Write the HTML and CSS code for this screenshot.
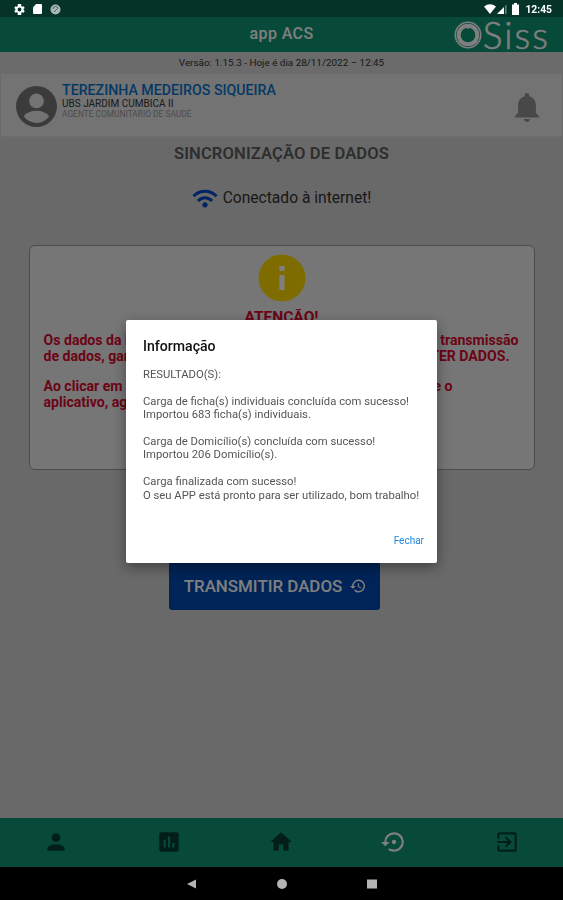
FILE: index.html
```
<!DOCTYPE html>
<html lang="pt-BR">
<head>
    <meta charset="UTF-8">
    <meta name="viewport" content="width=device-width, initial-scale=1.0">
    <title>app ACS</title>
    <link rel="stylesheet" href="styles.css">
</head>
<body>
    <div class="tela">
        <div class="status-bar"></div>
        <header class="topo">
            <h1>app ACS</h1>
            <div class="logo">
                <svg viewBox="0 0 28 28" width="28" height="28" fill="none" stroke="#fff">
                    <circle cx="14" cy="14" r="12.7" stroke-width="1.6"/>
                    <circle cx="14" cy="14" r="9.3" stroke-width="4"/>
                    <path d="M7 9c2-4 5-5 7-2 2-3 6-2 7 2" stroke-width="1.5"/>
                    <path d="M5 20c4 5 14 5 18 0" stroke-width="2"/>
                </svg>
                <span>Siss</span>
            </div>
        </header>
        <div class="versao">Versão: 1.15.3 - Hoje é dia 28/11/2022 – 12:45</div>
        <section class="usuario">
            <svg class="avatar" viewBox="2 2 20 20" width="41" height="41"><path d="M12 2a10 10 0 1 0 0 20 10 10 0 0 0 0-20zm0 3.7a3.6 3.6 0 1 1 0 7.2 3.6 3.6 0 0 1 0-7.2zM12 20c-2.500 0-4.800-1.200-6.200-3.200 1-1.800 4-2.700 6.200-2.700s5.200.9 6.200 2.700A7.500 7.500 0 0 1 12 20z"/></svg>
            <div class="dados-usuario">
                <div class="nome">TEREZINHA MEDEIROS SIQUEIRA</div>
                <div class="unidade">UBS JARDIM CUMBICA II</div>
                <div class="cargo">AGENTE COMUNITARIO DE SAUDE</div>
            </div>
            <svg class="sino" viewBox="4 2.500 16 19.500" width="24" height="29"><path d="M12 22c1.100 0 2-.9 2-2h-4c0 1.100.9 2 2 2zm6-6v-5c0-3.070-1.640-5.640-4.500-6.320V4a1.500 1.500 0 0 0-3 0v.68C7.630 5.360 6 7.920 6 11v5l-2 2v1h16v-1l-2-2z"/></svg>
        </section>

        <main class="conteudo">
            <h2>SINCRONIZAÇÃO DE DADOS</h2>
            <div class="conexao">
                <svg viewBox="0 0 26 19" width="26" height="19" fill="none" stroke="#0048c8" stroke-width="3">
                    <path d="M1.500 7.300C8 .6 18 .6 24.500 7.300"/>
                    <path d="M6 12c4-4.300 10-4.300 14 0"/>
                    <circle cx="13" cy="15.800" r="2.600" fill="#0048c8" stroke="none"/>
                </svg>
                <span>Conectado à internet!</span>
            </div>
            <div class="aviso">
                <svg class="info" viewBox="0 0 48 48" width="48" height="48">
                    <circle cx="24" cy="24" r="23.500" fill="#ffd800"/>
                    <path d="M21.500 12h5v5h-5zM21.500 21h5v15h-5z" fill="#fff"/>
                </svg>
                <h3>ATENÇÃO!</h3>
                <p class="linha"><span>Os dados da base</span><span>transmissão</span></p>
                <p class="linha linha-obter"><span>de dados, garanta</span><span>OBTER DADOS.</span></p>
                <p class="linha linha-final"><span>Ao clicar em</span><span>e o</span></p>
                <p class="linha"><span>aplicativo, aguarde</span></p>
            </div>
            <button class="transmitir" type="button">
                <span>TRANSMITIR DADOS</span>
                <svg viewBox="1 3 21 18" width="15" height="14"><path d="M13 3a9 9 0 0 0-9 9H1l4 4 4-4H6a7 7 0 1 1 2.060 4.940l-1.420 1.420A9 9 0 1 0 13 3zm-1 5v5l4.280 2.540.72-1.210-3.500-2.080V8H12z"/></svg>
            </button>
        </main>

        <nav class="menu">
            <a><svg viewBox="0 0 24 24"><path d="M12 12a4 4 0 1 0 0-8 4 4 0 0 0 0 8zm0 2c-2.670 0-8 1.340-8 4v2h16v-2c0-2.660-5.330-4-8-4z"/></svg></a>
            <a><svg viewBox="0 0 24 24"><path d="M19 3H5a2 2 0 0 0-2 2v14c0 1.100.9 2 2 2h14a2 2 0 0 0 2-2V5a2 2 0 0 0-2-2zM9 17H7v-7h2v7zm4 0h-2V7h2v10zm4 0h-2v-4h2v4z"/></svg></a>
            <a><svg viewBox="0 0 24 24"><path d="M10 20v-6h4v6h5v-8h3L12 3 2 12h3v8z"/></svg></a>
            <a class="ativo"><svg viewBox="0 0 24 24"><path d="M14 12a2 2 0 1 0-4 0 2 2 0 0 0 4 0zm-2-9a9 9 0 0 0-9 9H0l4 4 4-4H5a7 7 0 1 1 2.940 5.700l-1.420 1.440A9 9 0 1 0 12 3z"/></svg></a>
            <a><svg viewBox="0 0 24 24"><path d="M10.090 15.590 11.500 17l5-5-5-5-1.410 1.410L12.670 11H3v2h9.670l-2.580 2.590zM19 3H5a2 2 0 0 0-2 2v4h2V5h14v14H5v-4H3v4a2 2 0 0 0 2 2h14a2 2 0 0 0 2-2V5a2 2 0 0 0-2-2z"/></svg></a>
        </nav>
    </div>

    <div class="fundo">
        <div class="sistema">
            <div class="grupo">
                <svg viewBox="2 2 20 20" width="11" height="11"><path d="M19.400 13a7.800 7.800 0 0 0 0-2l2.100-1.600-2-3.500-2.500 1a7.600 7.600 0 0 0-1.700-1L15 2H9l-.4 3.900-1.600 1-2.500-1-2 3.500L4.600 11a7.800 7.800 0 0 0 0 2l-2.100 1.600 2 3.500 2.500-1 1.600 1L9 22h6l.4-3.900 1.600-1 2.500 1 2-3.500zM12 15.500a3.500 3.500 0 1 1 0-7 3.500 3.500 0 0 1 0 7z"/></svg>
                <svg viewBox="0 0 10 11" width="9" height="10"><path d="M3.500 0H9q1 0 1 1v9q0 1-1 1H1q-1 0-1-1V3.500z"/></svg>
                <svg class="apagado" viewBox="0 0 11 11" width="11" height="11"><circle cx="5.500" cy="5.500" r="5"/><path d="M3 5a2.500 2.500 0 0 1 5 0M4 8l3-3" fill="none" stroke="#46665c"/></svg>
            </div>
            <div class="grupo direita">
                <svg viewBox="0 0 12 10" width="12" height="10"><path d="M0 2.500Q6-2 12 2.500L6 10z"/></svg>
                <svg viewBox="0 0 10 10" width="10" height="10"><path d="M0 10 7 3v7z"/><path d="M8 2l1.500-1.500V10H8z" opacity=".4"/></svg>
                <svg class="bateria" viewBox="0 0 7 12" width="7" height="12"><path d="M2 0h3v1.500h2V12H0V1.500h2z"/></svg>
                <span>12:45</span>
            </div>
        </div>
        <div class="modal">
            <h4>Informação</h4>
            <div class="resultado">
                <p>RESULTADO(S):</p>
                <p>Carga de ficha(s) individuais concluída com sucesso!<br>Importou 683 ficha(s) individuais.</p>
                <p>Carga de Domicílio(s) concluída com sucesso!<br>Importou 206 Domicílio(s).</p>
                <p>Carga finalizada com sucesso!<br>O seu APP está pronto para ser utilizado, bom trabalho!</p>
            </div>
            <button class="fechar" type="button">Fechar</button>
        </div>
        <div class="navegacao">
            <svg viewBox="0 0 10 10" width="10" height="10"><path d="M0 5 9 .5v9z"/></svg>
            <svg viewBox="0 0 10 10" width="10" height="10"><circle cx="5" cy="5" r="5"/></svg>
            <svg viewBox="0 0 10 10" width="10" height="10"><path d="M0 .5h10v9H0z"/></svg>
        </div>
    </div>
</body>
</html>
```
FILE: styles.css
```
* {
    box-sizing: border-box;
}
body {
    margin: 0;
    font-family: Roboto, sans-serif;
    background: #000;
}
h1, h2, h3, h4, p {
    margin: 0;
}
svg {
    display: block;
    flex-shrink: 0;
}
.tela {
    height: 867px;
    display: flex;
    flex-direction: column;
    background: #d2d2d2;
}
.status-bar {
    height: 17px;
    background: #0a6650;
}
.topo {
    height: 35px;
    display: grid;
    grid-template-columns: 1fr auto 1fr;
    align-items: center;
    background: #109474;
    color: #fff;
}
.topo h1 {
    grid-column: 2;
    margin-top: -2px;
    font-size: 16px;
    font-weight: 500;
    letter-spacing: 0.4px;
}
.logo {
    display: flex;
    align-items: center;
    justify-content: flex-end;
    gap: 1px;
    padding-right: 13px;
}
.logo span {
    font-family: Lato, sans-serif;
    font-size: 37px;
    font-weight: 300;
    line-height: 35px;
    letter-spacing: 2px;
    -webkit-text-stroke: 0.5px #fff;
}
.versao {
    height: 22px;
    line-height: 22px;
    text-align: center;
    font-size: 9.9px;
    color: #333;
    background: #d6d6d6;
}
.usuario {
    height: 63px;
    display: flex;
    align-items: center;
    padding: 0 23px 0 15px;
    margin: 0 1px;
    background: #e6e6e6;
    border-bottom: 1px solid #dadada;
}
.avatar {
    fill: #777;
    margin-top: 3px;
}
.dados-usuario {
    flex: 1;
    padding-left: 5px;
    margin-top: -8px;
}
.nome {
    font-size: 14.2px;
    line-height: 16px;
    font-weight: 500;
    color: #0873cc;
}
.unidade {
    font-size: 10px;
    line-height: 11px;
    color: #333;
}
.cargo {
    font-size: 8.4px;
    line-height: 11px;
    color: #999;
}
.sino {
    margin-top: 4px;
    fill: #909090;
}
.conteudo {
    flex: 1;
    display: flex;
    flex-direction: column;
    align-items: center;
    padding-top: 7px;
}
.conteudo h2 {
    font-size: 16.6px;
    line-height: 20px;
    font-weight: 600;
    letter-spacing: 0.1px;
    color: #5c5c5c;
}
.conexao {
    display: flex;
    align-items: center;
    gap: 5px;
    height: 20px;
    margin-top: 24px;
    font-size: 15.6px;
    color: #333;
}
.aviso {
    width: 506px;
    height: 225px;
    margin-top: 37px;
    padding: 8px 14px;
    background: #ededed;
    border: 1px solid #999;
    border-radius: 6px;
    color: #d8082d;
}
.info {
    margin: 0 auto;
}
.aviso h3 {
    margin: 7px 0 6px;
    font-size: 15.5px;
    line-height: 17px;
    text-align: center;
    font-weight: 700;
}
.linha {
    display: flex;
    justify-content: space-between;
    padding-right: 1px;
    font-size: 14.1px;
    line-height: 16px;
    font-weight: 700;
}
.linha-obter {
    padding-right: 10px;
}
.linha-final {
    margin-top: 14px;
    padding-right: 67px;
}
.transmitir {
    width: 211px;
    height: 48px;
    margin: 92px 14px 0 0;
    display: flex;
    align-items: center;
    justify-content: center;
    gap: 8px;
    border: 0;
    border-radius: 3px;
    background: #0048b0;
    color: #fff;
    fill: #fff;
    font-family: inherit;
    font-size: 16.9px;
    font-weight: 500;
}
.menu {
    height: 49px;
    display: grid;
    grid-template-columns: repeat(5, 1fr);
    background: #109474;
    fill: #043c30;
}
.menu a {
    display: flex;
    align-items: center;
    justify-content: center;
    padding-bottom: 2px;
}
.menu svg {
    width: 26px;
    height: 26px;
}
.menu .ativo {
    fill: #fff;
}

/* camada escura com a caixa de diálogo */
.fundo {
    position: fixed;
    inset: 0;
    display: flex;
    flex-direction: column;
    align-items: center;
    background: rgba(0, 0, 0, 0.5);
}
.sistema {
    width: 100%;
    height: 17px;
    display: flex;
    align-items: center;
    justify-content: space-between;
    padding: 1px 11px 0 14px;
    color: #fff;
    fill: #fff;
    font-size: 10.3px;
    font-weight: 700;
}
.grupo {
    display: flex;
    align-items: center;
    gap: 8px;
}
.direita {
    gap: 1px;
}
.bateria {
    margin: 0 5px 0 4px;
}
.apagado {
    fill: #a9b9b4;
}
.modal {
    width: 311px;
    height: 243px;
    margin-top: 303px;
    padding: 16px 13px 12px 17px;
    display: flex;
    flex-direction: column;
    background: #fff;
    border-radius: 2px;
    box-shadow: 0 4px 14px rgba(0, 0, 0, 0.4);
}
.modal h4 {
    font-size: 14.1px;
    line-height: 20px;
    font-weight: 500;
    color: #111;
}
.resultado {
    margin-top: 12px;
    font-size: 11.27px;
    line-height: 13.4px;
    color: #555;
    white-space: nowrap;
}
.resultado p + p {
    margin-top: 13.4px;
}
.fechar {
    margin-top: auto;
    align-self: flex-end;
    padding: 0;
    border: 0;
    background: none;
    font-family: inherit;
    font-size: 10px;
    line-height: 20px;
    color: #1e88e5;
}
.navegacao {
    width: 100%;
    height: 33px;
    margin-top: auto;
    display: flex;
    align-items: center;
    justify-content: center;
    gap: 80px;
    background: #000;
    fill: #b4b4b4;
}
```
